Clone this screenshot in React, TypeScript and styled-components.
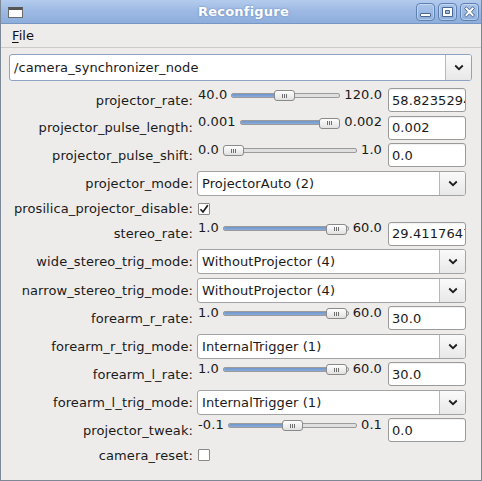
import React from "react";
import styled, { createGlobalStyle } from "styled-components";

const Global = createGlobalStyle`
  html, body { margin: 0; padding: 0; background: #edeceb; }
  body { font-family: "DejaVu Sans", "Liberation Sans", sans-serif; font-size: 13px; letter-spacing: 0.1px; color: #1a1a1a; }
  * { box-sizing: border-box; }
`;

const Frame = styled.div`
  width: 482px;
  height: 481px;
  display: flex;
  flex-direction: column;
  background: #edeceb;
  border: 1px solid #7d8896;
  border-top: none;
  overflow: hidden;
`;

const TitleBar = styled.div`
  height: 24px;
  margin: 0 -1px;
  display: grid;
  grid-template-columns: 1fr auto 1fr;
  align-items: center;
  padding: 0 3px 0 8px;
  background: linear-gradient(#b3cbed, #9cb9e3 50%, #8daedb);
  border-bottom: 1px solid #7896c3;
`;

const TitleIcon = styled.div`
  justify-self: start;
  width: 15px;
  height: 11px;
  border: 1px solid #6a6a6a;
  border-top-width: 3px;
  border-top-color: #555;
  background: #fdfdfd;
  margin-top: 1px;
`;

const TitleText = styled.div`
  color: #fff;
  font-weight: bold;
  font-size: 13px;
  letter-spacing: 0.2px;
  text-shadow: 0 0 2px #5d7fb3;
`;

const TitleButtons = styled.div`
  justify-self: end;
  display: flex;
  gap: 3px;
`;

const TitleButton = styled.div`
  width: 19px;
  height: 18px;
  border: 1px solid #5f80b3;
  border-radius: 4px;
  background: linear-gradient(#aac4ea, #8eafdc);
  box-shadow: inset 0 0 0 1px rgba(255, 255, 255, 0.35);
  display: flex;
  align-items: center;
  justify-content: center;
`;

const MenuBar = styled.div`
  height: 24px;
  display: flex;
  align-items: center;
  padding-left: 11px;
  border-bottom: 1px solid #cdcbc9;
`;

const MenuItem = styled.span`
  font-size: 13px;
  color: #111;
  & u { text-decoration-thickness: 1px; text-underline-offset: 2px; }
`;

const Content = styled.div`
  padding: 6px 9px 0 8px;
  display: flex;
  flex-direction: column;
  gap: 6px;
`;

const Combo = styled.div<{ $height: number; $focus?: boolean }>`
  height: ${(p) => p.$height}px;
  display: flex;
  background: #fff;
  border: 1px solid ${(p) => (p.$focus ? "#8ea3c4" : "#a3a3a3")};
  border-radius: 3px;
  overflow: hidden;
`;

const ComboText = styled.div`
  flex: 1;
  display: flex;
  align-items: center;
  padding-left: 4px;
  white-space: nowrap;
  overflow: hidden;
`;

const ComboButton = styled.div`
  width: 26px;
  display: flex;
  align-items: center;
  justify-content: center;
  border-left: 1px solid #b8b8b8;
  background: linear-gradient(#fafafa, #e8e8e8);
`;

const Form = styled.div`
  display: grid;
  grid-template-columns: 184px 269px;
  column-gap: 4px;
  row-gap: 3.5px;
  padding-top: 1px;
  align-items: center;
`;

const FieldLabel = styled.div`
  text-align: right;
  white-space: nowrap;
  align-self: center;
`;

const SliderRow = styled.div`
  height: 24px;
  display: flex;
  align-items: flex-start;
  gap: 6px;
`;

const SliderGroup = styled.div`
  flex: 1;
  height: 16px;
  margin-top: -1px;
  padding-left: 1px;
  display: flex;
  align-items: center;
  gap: 4px;
`;

const RangeLabel = styled.span`
  white-space: nowrap;
  line-height: 15px;
  margin-top: -2px;
`;

const Track = styled.div`
  position: relative;
  flex: 1;
  height: 12px;
  display: flex;
  align-items: center;
`;

const Groove = styled.div`
  width: 100%;
  height: 5px;
  border: 1px solid #9b9b9b;
  border-radius: 2px;
  background: #dfdfdf;
  overflow: hidden;
  display: flex;
`;

const GrooveFill = styled.div`
  height: 100%;
  background: linear-gradient(#6f95cb, #8bacd9);
  border-right: 1px solid #5a7fb4;
`;

const Handle = styled.div`
  position: absolute;
  top: 1px;
  width: 21px;
  height: 11px;
  border: 1px solid #8a8a8a;
  border-radius: 3px;
  background: linear-gradient(#fefefe, #e1e1e1);
  display: flex;
  align-items: center;
  justify-content: center;
  gap: 1px;
`;

const Grip = styled.span`
  width: 1px;
  height: 4px;
  background: #6d6d6d;
`;

const TextBox = styled.div`
  width: 78px;
  height: 24px;
  flex: none;
  background: #fff;
  border: 1px solid #9a9a9a;
  border-radius: 3px;
  padding: 0 0 0 3px;
  display: flex;
  align-items: center;
  white-space: nowrap;
  overflow: hidden;
  box-shadow: inset 0 1px 1px rgba(0, 0, 0, 0.06);
`;

const CheckRow = styled.div`
  height: 19px;
  display: flex;
  align-items: center;
  padding-left: 1px;
`;

const CheckBox = styled.div`
  width: 12px;
  height: 12px;
  border: 1px solid #8a8a8a;
  border-radius: 1px;
  background: #fff;
  display: flex;
  align-items: center;
  justify-content: center;
`;

const Chevron = () => (
  <svg width="10" height="7" viewBox="0 0 10 7">
    <path d="M1.2 1.5 L5 5.2 L8.8 1.5" fill="none" stroke="#1e1e1e" strokeWidth="1.8" />
  </svg>
);

type Row =
  | { name: string; kind: "slider"; min: string; max: string; frac: number; value: string }
  | { name: string; kind: "combo"; value: string }
  | { name: string; kind: "check"; checked: boolean };

const rows: Row[] = [
  { name: "projector_rate", kind: "slider", min: "40.0", max: "120.0", frac: 0.48, value: "58.8235294117647" },
  { name: "projector_pulse_length", kind: "slider", min: "0.001", max: "0.002", frac: 1, value: "0.002" },
  { name: "projector_pulse_shift", kind: "slider", min: "0.0", max: "1.0", frac: 0, value: "0.0" },
  { name: "projector_mode", kind: "combo", value: "ProjectorAuto (2)" },
  { name: "prosilica_projector_disable", kind: "check", checked: true },
  { name: "stereo_rate", kind: "slider", min: "1.0", max: "60.0", frac: 0.98, value: "29.4117647058824" },
  { name: "wide_stereo_trig_mode", kind: "combo", value: "WithoutProjector (4)" },
  { name: "narrow_stereo_trig_mode", kind: "combo", value: "WithoutProjector (4)" },
  { name: "forearm_r_rate", kind: "slider", min: "1.0", max: "60.0", frac: 0.98, value: "30.0" },
  { name: "forearm_r_trig_mode", kind: "combo", value: "InternalTrigger (1)" },
  { name: "forearm_l_rate", kind: "slider", min: "1.0", max: "60.0", frac: 0.98, value: "30.0" },
  { name: "forearm_l_trig_mode", kind: "combo", value: "InternalTrigger (1)" },
  { name: "projector_tweak", kind: "slider", min: "-0.1", max: "0.1", frac: 0.5, value: "0.0" },
  { name: "camera_reset", kind: "check", checked: false },
];

const Slider = ({ min, max, frac }: { min: string; max: string; frac: number }) => (
  <SliderGroup>
    <RangeLabel>{min}</RangeLabel>
    <Track>
      <Groove>
        <GrooveFill style={{ width: `calc(${frac} * (100% - 21px) + 4px)` }} />
      </Groove>
      <Handle style={{ left: `calc(${frac} * (100% - 21px))` }}>
        <Grip />
        <Grip />
        <Grip />
      </Handle>
    </Track>
    <RangeLabel>{max}</RangeLabel>
  </SliderGroup>
);

const Widget = ({ row }: { row: Row }) => {
  if (row.kind === "slider") {
    return (
      <SliderRow>
        <Slider min={row.min} max={row.max} frac={row.frac} />
        <TextBox>{row.value}</TextBox>
      </SliderRow>
    );
  }
  if (row.kind === "combo") {
    return (
      <Combo $height={25}>
        <ComboText>{row.value}</ComboText>
        <ComboButton>
          <Chevron />
        </ComboButton>
      </Combo>
    );
  }
  return (
    <CheckRow>
      <CheckBox>
        {row.checked && (
          <svg width="10" height="10" viewBox="0 0 10 10">
            <path d="M1.5 5.2 L4 8 L8.8 1.2" fill="none" stroke="#1a1a1a" strokeWidth="1.7" />
          </svg>
        )}
      </CheckBox>
    </CheckRow>
  );
};

const glyph = { fill: "#fff", stroke: "#4a6794", strokeWidth: 1 };

export default function App() {
  return (
    <>
      <Global />
      <Frame>
        <TitleBar>
          <TitleIcon />
          <TitleText>Reconfigure</TitleText>
          <TitleButtons>
            <TitleButton>
              <svg width="13" height="12" viewBox="0 0 13 12">
                <rect x="1.5" y="7.5" width="10" height="3" rx="0.5" {...glyph} />
              </svg>
            </TitleButton>
            <TitleButton>
              <svg width="13" height="12" viewBox="0 0 13 12">
                <path d="M1.5 1.5 H11.5 V10.5 H1.5 Z M4.5 4.5 V7.5 H8.5 V4.5 Z" fillRule="evenodd" {...glyph} />
              </svg>
            </TitleButton>
            <TitleButton>
              <svg width="13" height="12" viewBox="0 0 13 12">
                <path
                  d="M1.5 2.5 L3.5 0.8 L6.5 3.8 L9.5 0.8 L11.5 2.5 L8.5 5.8 L11.5 9.2 L9.5 10.9 L6.5 7.8 L3.5 10.9 L1.5 9.2 L4.5 5.8 Z"
                  {...glyph}
                />
              </svg>
            </TitleButton>
          </TitleButtons>
        </TitleBar>
        <MenuBar>
          <MenuItem>
            <u>F</u>ile
          </MenuItem>
        </MenuBar>
        <Content>
          <Combo $height={27} $focus>
            <ComboText>/camera_synchronizer_node</ComboText>
            <ComboButton>
              <Chevron />
            </ComboButton>
          </Combo>
          <Form>
            {rows.map((row) => (
              <React.Fragment key={row.name}>
                <FieldLabel>{row.name}:</FieldLabel>
                <Widget row={row} />
              </React.Fragment>
            ))}
          </Form>
        </Content>
      </Frame>
    </>
  );
}
